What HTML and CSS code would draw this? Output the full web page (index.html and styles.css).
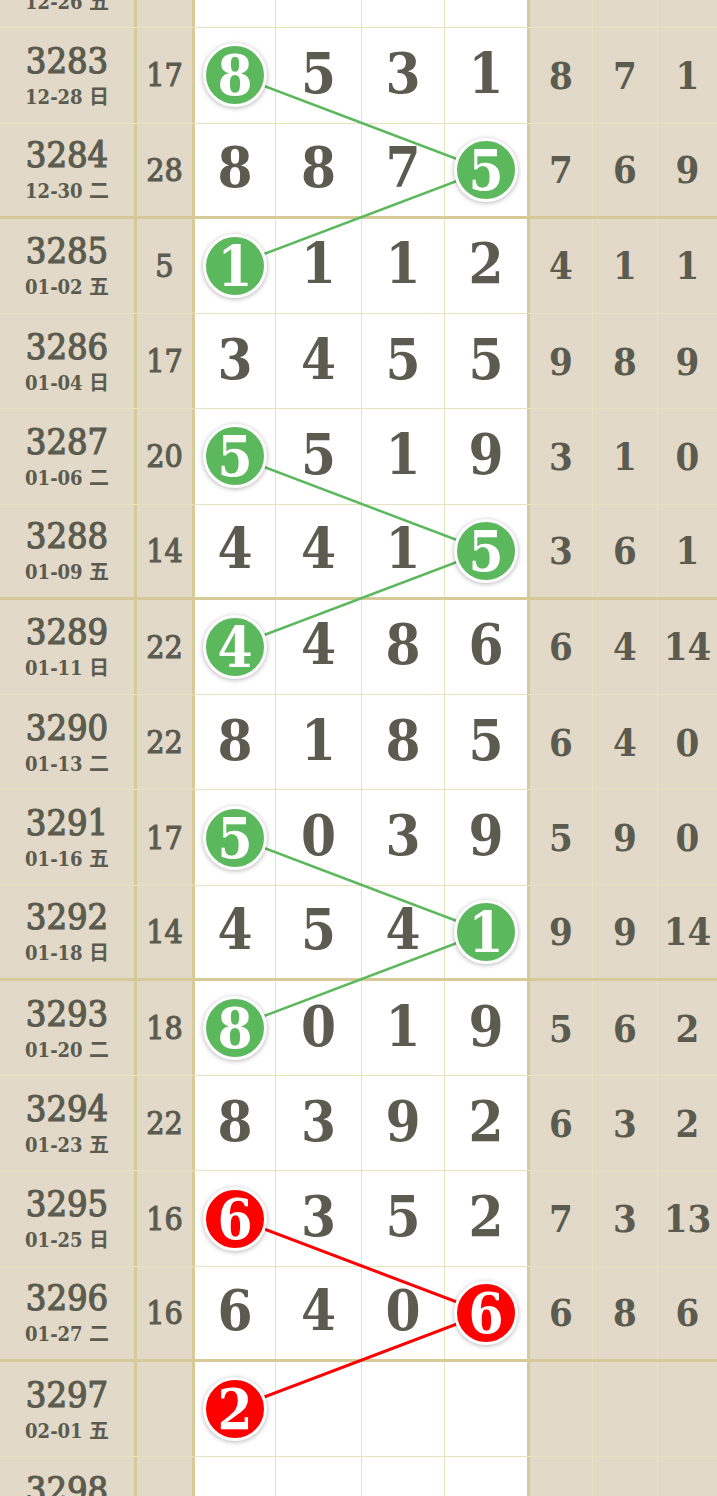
FILE: index.html
```html
<!DOCTYPE html>
<html lang="zh-CN">
<head>
    <meta charset="utf-8" />
    <meta name="viewport" content="width=device-width, initial-scale=1.0" />
    <title>走势图</title>
    <link rel="stylesheet" href="styles.css">
</head>
<body>
<!--走势表-->
<div class="chart">
    <svg class="links" width="717" height="1620" viewBox="0 0 717 1620">
        <polyline class="green" points="235,142 486,237 235,332" />
        <polyline class="green" points="235,523 486,618 235,713" />
        <polyline class="green" points="235,904 486,999 235,1094" />
        <polyline class="red" points="235,1285 486,1380 235,1475" />
    </svg>

    <div class="row">
        <div class="c qi"><b>3282</b><span>12-26 五</span></div>
        <div class="c sum">12</div>
        <div class="c n">2</div><div class="c n">6</div><div class="c n">3</div><div class="c n">0</div>
        <div class="c s">5</div><div class="c s">2</div><div class="c s s-last">4</div>
    </div>
    <div class="row">
        <div class="c qi"><b>3283</b><span>12-28 日</span></div>
        <div class="c sum">17</div>
        <div class="c n"><i class="ball">8</i></div><div class="c n">5</div><div class="c n">3</div><div class="c n">1</div>
        <div class="c s">8</div><div class="c s">7</div><div class="c s s-last">1</div>
    </div>
    <div class="row end">
        <div class="c qi"><b>3284</b><span>12-30 二</span></div>
        <div class="c sum">28</div>
        <div class="c n">8</div><div class="c n">8</div><div class="c n">7</div><div class="c n"><i class="ball">5</i></div>
        <div class="c s">7</div><div class="c s">6</div><div class="c s s-last">9</div>
    </div>
    <div class="row">
        <div class="c qi"><b>3285</b><span>01-02 五</span></div>
        <div class="c sum">5</div>
        <div class="c n"><i class="ball">1</i></div><div class="c n">1</div><div class="c n">1</div><div class="c n">2</div>
        <div class="c s">4</div><div class="c s">1</div><div class="c s s-last">1</div>
    </div>
    <div class="row">
        <div class="c qi"><b>3286</b><span>01-04 日</span></div>
        <div class="c sum">17</div>
        <div class="c n">3</div><div class="c n">4</div><div class="c n">5</div><div class="c n">5</div>
        <div class="c s">9</div><div class="c s">8</div><div class="c s s-last">9</div>
    </div>
    <div class="row">
        <div class="c qi"><b>3287</b><span>01-06 二</span></div>
        <div class="c sum">20</div>
        <div class="c n"><i class="ball">5</i></div><div class="c n">5</div><div class="c n">1</div><div class="c n">9</div>
        <div class="c s">3</div><div class="c s">1</div><div class="c s s-last">0</div>
    </div>
    <div class="row end">
        <div class="c qi"><b>3288</b><span>01-09 五</span></div>
        <div class="c sum">14</div>
        <div class="c n">4</div><div class="c n">4</div><div class="c n">1</div><div class="c n"><i class="ball">5</i></div>
        <div class="c s">3</div><div class="c s">6</div><div class="c s s-last">1</div>
    </div>
    <div class="row">
        <div class="c qi"><b>3289</b><span>01-11 日</span></div>
        <div class="c sum">22</div>
        <div class="c n"><i class="ball">4</i></div><div class="c n">4</div><div class="c n">8</div><div class="c n">6</div>
        <div class="c s">6</div><div class="c s">4</div><div class="c s s-last">14</div>
    </div>
    <div class="row">
        <div class="c qi"><b>3290</b><span>01-13 二</span></div>
        <div class="c sum">22</div>
        <div class="c n">8</div><div class="c n">1</div><div class="c n">8</div><div class="c n">5</div>
        <div class="c s">6</div><div class="c s">4</div><div class="c s s-last">0</div>
    </div>
    <div class="row">
        <div class="c qi"><b>3291</b><span>01-16 五</span></div>
        <div class="c sum">17</div>
        <div class="c n"><i class="ball">5</i></div><div class="c n">0</div><div class="c n">3</div><div class="c n">9</div>
        <div class="c s">5</div><div class="c s">9</div><div class="c s s-last">0</div>
    </div>
    <div class="row end">
        <div class="c qi"><b>3292</b><span>01-18 日</span></div>
        <div class="c sum">14</div>
        <div class="c n">4</div><div class="c n">5</div><div class="c n">4</div><div class="c n"><i class="ball">1</i></div>
        <div class="c s">9</div><div class="c s">9</div><div class="c s s-last">14</div>
    </div>
    <div class="row">
        <div class="c qi"><b>3293</b><span>01-20 二</span></div>
        <div class="c sum">18</div>
        <div class="c n"><i class="ball">8</i></div><div class="c n">0</div><div class="c n">1</div><div class="c n">9</div>
        <div class="c s">5</div><div class="c s">6</div><div class="c s s-last">2</div>
    </div>
    <div class="row">
        <div class="c qi"><b>3294</b><span>01-23 五</span></div>
        <div class="c sum">22</div>
        <div class="c n">8</div><div class="c n">3</div><div class="c n">9</div><div class="c n">2</div>
        <div class="c s">6</div><div class="c s">3</div><div class="c s s-last">2</div>
    </div>
    <div class="row">
        <div class="c qi"><b>3295</b><span>01-25 日</span></div>
        <div class="c sum">16</div>
        <div class="c n"><i class="ball red">6</i></div><div class="c n">3</div><div class="c n">5</div><div class="c n">2</div>
        <div class="c s">7</div><div class="c s">3</div><div class="c s s-last">13</div>
    </div>
    <div class="row end">
        <div class="c qi"><b>3296</b><span>01-27 二</span></div>
        <div class="c sum">16</div>
        <div class="c n">6</div><div class="c n">4</div><div class="c n">0</div><div class="c n"><i class="ball red">6</i></div>
        <div class="c s">6</div><div class="c s">8</div><div class="c s s-last">6</div>
    </div>
    <div class="row">
        <div class="c qi"><b>3297</b><span>02-01 五</span></div>
        <div class="c sum"></div>
        <div class="c n"><i class="ball red">2</i></div><div class="c n"></div><div class="c n"></div><div class="c n"></div>
        <div class="c s"></div><div class="c s"></div><div class="c s s-last"></div>
    </div>
    <div class="row">
        <div class="c qi"><b>3298</b><span>02-03 日</span></div>
        <div class="c sum"></div>
        <div class="c n"></div><div class="c n"></div><div class="c n"></div><div class="c n"></div>
        <div class="c s"></div><div class="c s"></div><div class="c s s-last"></div>
    </div>
</div>
</body>
</html>
```

FILE: styles.css
```css
/*page*/
html,body{margin:0;padding:0;background:#fff;overflow:hidden}

/*chart*/
.chart{
    position: relative;
    margin-top: -67px;
    width: 717px;
    font-family: "DejaVu Serif Condensed", "DejaVu Serif", "Noto Sans CJK SC", serif;
    color: #5b5b4f;
}
.row{
    display: grid;
    grid-template-columns: 137px 58px 81px 86px 83px 85px 63px 65px 59px;
    height: 95.27px;
    box-sizing: border-box;
    border-bottom: 1px solid #e9e1bf;
}
.row.end{border-bottom: 3px solid #d6cb98}

.c{
    display: flex;
    align-items: center;
    justify-content: center;
    border-right: 1px solid #e9e1bf;
    background: #e2d9c8;
}
.c.n{background: #fff; font-size: 56px; font-weight: bold; padding-bottom: 5px}
.c.n:nth-child(6){border-right: 3px solid #d6cb98}
.qi{flex-direction: column; border-right: 3px solid #d6cb98}
.qi b{font-weight: normal; font-size: 36px; line-height: 38px; -webkit-text-stroke: 1.2px #5b5b4f}
.qi span{font-weight: bold; font-size: 20px; line-height: 24px; margin-top: 5px}
.sum{font-size: 32px; border-right: 3px solid #d6cb98; -webkit-text-stroke: 1.1px #5b5b4f}
.s{font-size: 38px; font-weight: bold}
.s-last{border-right: 0}

/*balls*/
.ball{
    position: relative;
    z-index: 2;
    display: flex;
    align-items: center;
    justify-content: center;
    width: 58px;
    height: 58px;
    margin-top: 5px;
    border: 3px solid #fff;
    border-radius: 50%;
    background: #5cb85c;
    color: #fff;
    font-style: normal;
    font-size: 56px;
    line-height: 1;
    box-shadow: 0 1px 5px rgba(0,0,0,.3);
}
.ball.red{background: #f00}

/*lines*/
.links{position: absolute; top: 0; left: 0; z-index: 1; pointer-events: none}
.links polyline{fill: none; stroke-width: 2.5}
.links .green{stroke: #5cb85c}
.links .red{stroke: #f00; stroke-width: 3}
```
